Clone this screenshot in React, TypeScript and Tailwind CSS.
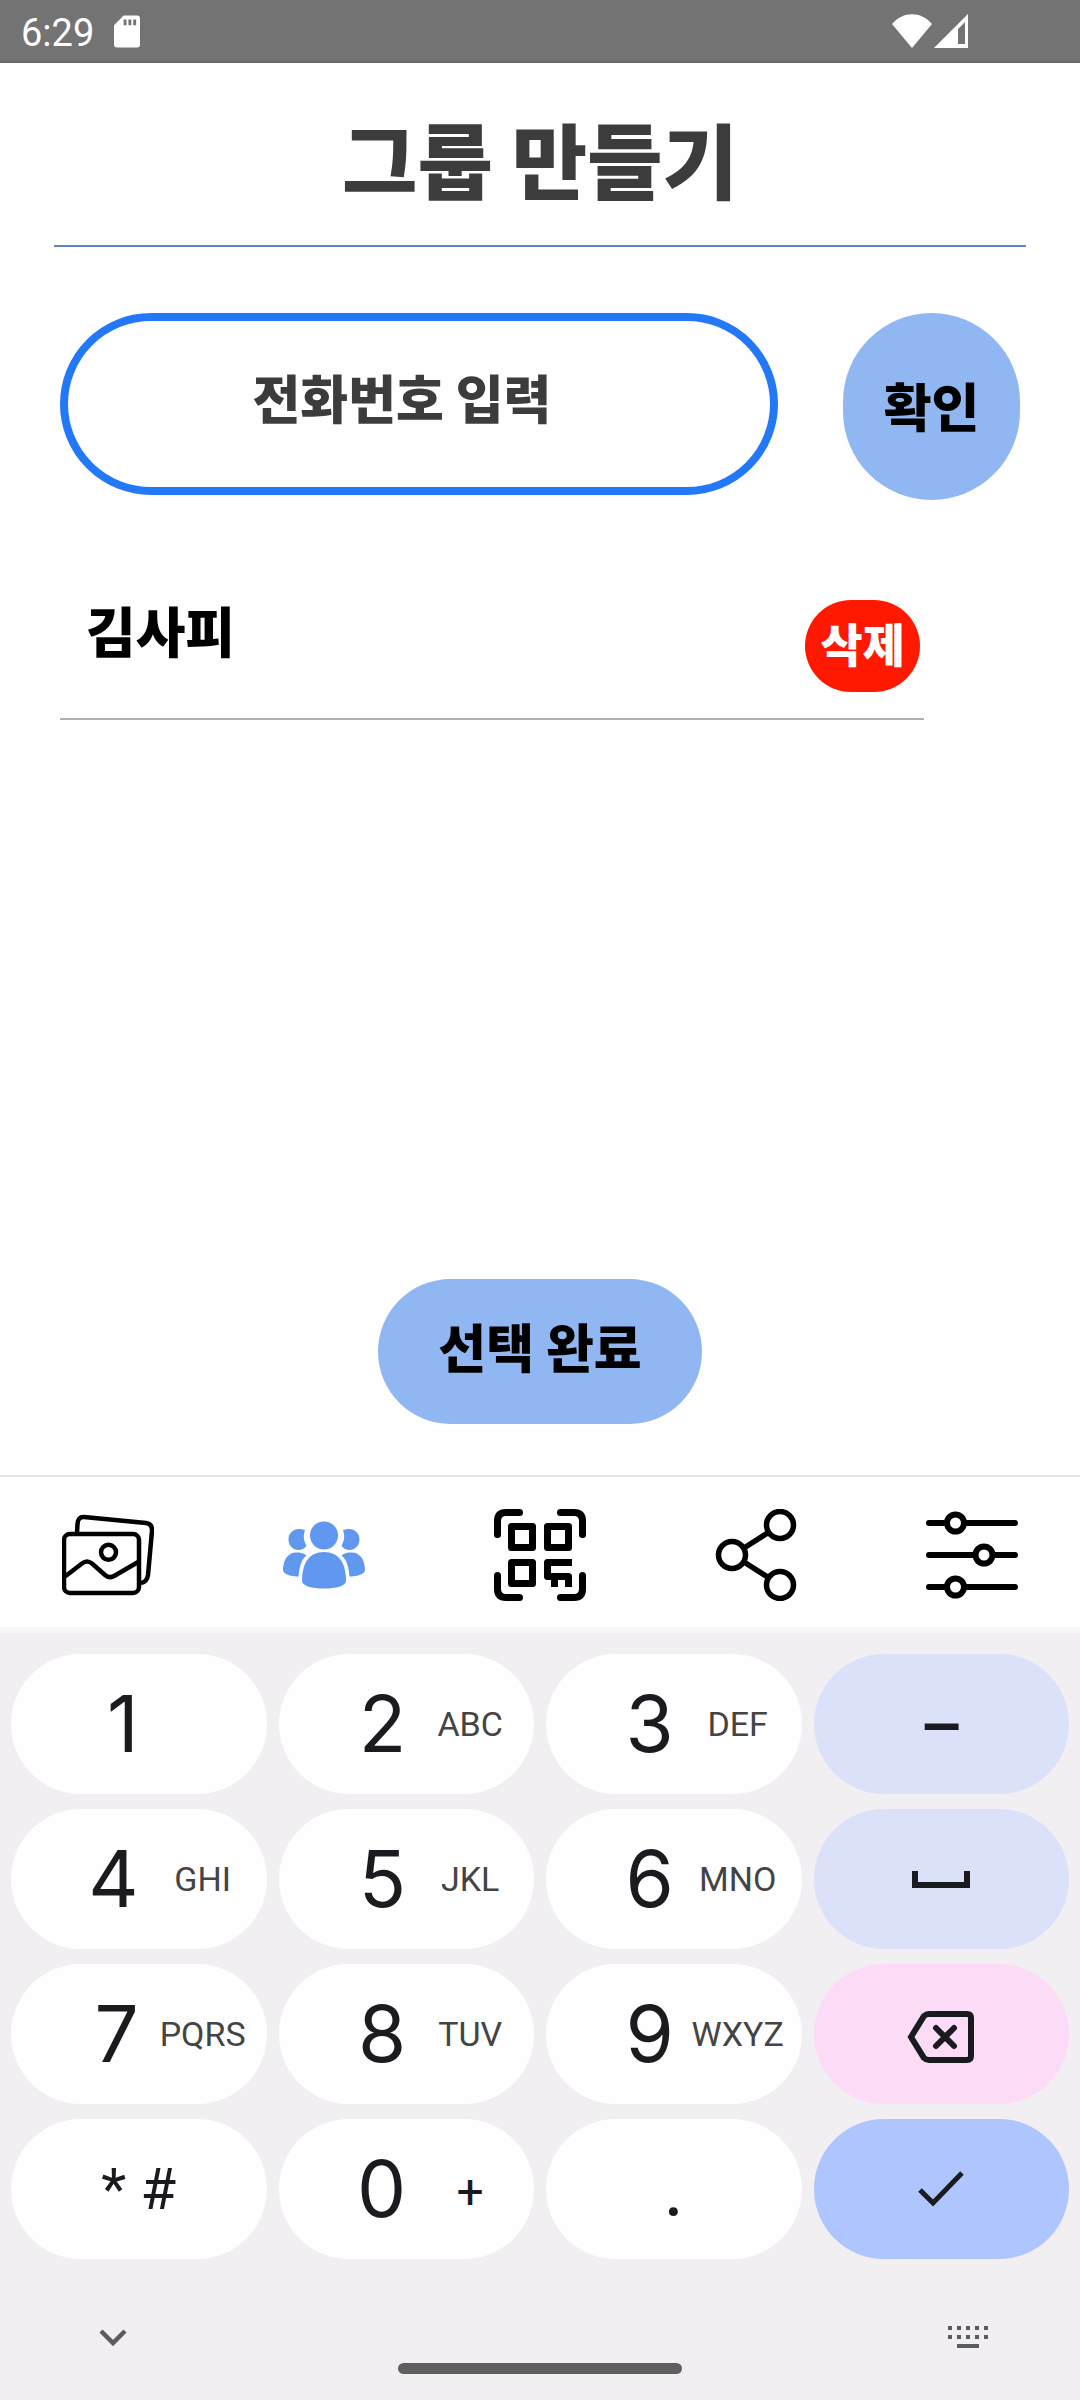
import type { ReactNode } from "react";

const korean = "font-['Noto_Sans_CJK_KR',sans-serif] font-black";

function StatusBar() {
  return (
    <div className="flex h-[63px] shrink-0 items-center border-b-2 border-[#686868] bg-[#737373] pl-[21px] pr-[112px] text-white">
      <span className="pt-1 text-[38px] leading-[40px]">6:29</span>
      <svg className="ml-[20px] mt-[2px] h-[33px] w-[26px]" viewBox="0 0 27 33" fill="currentColor" aria-hidden="true">
        <path d="M10 0H24Q27 0 27 3V30Q27 33 24 33H3Q0 33 0 30V10Z" />
        <path d="M10 4h3v6h-3zM15 4h3v6h-3zM20 4h3v6h-3z" fill="#737373" />
      </svg>
      <svg className="ml-auto h-[34px] w-[76px]" viewBox="0 0 76 34" fill="currentColor" aria-hidden="true">
        <path d="M0 10C11 -3 29 -3 40 10L20 34Z" />
        <path fillRule="evenodd" d="M76 0V34H42ZM73 8L66 15V30H73Z" />
      </svg>
    </div>
  );
}

function GalleryIcon() {
  return (
    <svg className="size-[92px]" viewBox="0 0 92 92" fill="none" stroke="currentColor" strokeWidth="4.5" aria-hidden="true">
      <path d="M15 24L15.500 15Q16 7.500 22 8L84 14Q90.500 15 90 22L86 66Q85 73 79 74" />
      <rect x="2" y="25" width="75" height="59" rx="6" />
      <circle cx="46.500" cy="43.300" r="7.500" />
      <path d="M3 67.500L20 54.500Q25 50.500 30 54.500L43 66Q47.500 70 53 66.500L77 52.500" />
    </svg>
  );
}

function PeopleIcon() {
  const side = (
    <>
      <path d="M27 21C25 27 25.500 31 28.500 37C26 40 23 41 20.500 41C15 41 10.500 36.500 10.500 30.500C10.500 24.500 15 20 21 20C23 20 25 20.300 27 21Z" />
      <path d="M5 61C5 51 10 43.500 18 43.500C22 43.500 26 44 28.500 46.500C23 51 21.500 58 20.500 67.500C14 67.500 5 65.500 5 61Z" />
    </>
  );
  return (
    <svg className="size-[92px] text-[#6198ef]" viewBox="0 0 92 92" fill="currentColor" aria-hidden="true">
      <circle cx="46" cy="26.500" r="14" />
      <path d="M24 72C24 54 31 43 46 43C61 43 68 54 68 72C68 77 58 79.500 46 79.500C34 79.500 24 77 24 72Z" />
      {side}
      <g transform="translate(92) scale(-1 1)">{side}</g>
    </svg>
  );
}

function QrIcon() {
  return (
    <svg className="size-[92px]" viewBox="0 0 92 92" fill="none" stroke="currentColor" strokeWidth="7" aria-hidden="true">
      <path
        strokeLinecap="round"
        d="M25.500 3.500H12Q3.500 3.500 3.500 12V25.500M66.500 3.500H80Q88.500 3.500 88.500 12V25.500M25.500 88.500H12Q3.500 88.500 3.500 80V66.500M66.500 88.500H80Q88.500 88.500 88.500 80V66.500"
      />
      <g strokeLinejoin="round">
        <rect x="17.500" y="17.500" width="21" height="21" />
        <rect x="53.500" y="17.500" width="21" height="21" />
        <rect x="17.500" y="53.500" width="21" height="21" />
        <path d="M78 53.500H53.500V67.500H74.500V78M60.500 67.500V78" />
      </g>
    </svg>
  );
}

function ShareIcon() {
  return (
    <svg className="size-[92px]" viewBox="0 0 92 92" fill="none" stroke="currentColor" strokeWidth="5.5" aria-hidden="true">
      <circle cx="70" cy="16" r="13.500" />
      <circle cx="22" cy="46" r="13.500" />
      <circle cx="70" cy="76" r="13.500" />
      <path d="M34 39L58.500 23.500M34 53L58.500 68.500" />
    </svg>
  );
}

function SlidersIcon() {
  return (
    <svg className="size-[92px]" viewBox="0 0 92 92" fill="none" stroke="currentColor" strokeWidth="6" strokeLinecap="round" aria-hidden="true">
      <path d="M3 14H20M40 14H89M3 46H48M68 46H89M3 78H20M40 78H89" />
      <circle cx="29.500" cy="14" r="8.500" />
      <circle cx="58" cy="46" r="8.500" />
      <circle cx="29.500" cy="78" r="8.500" />
    </svg>
  );
}

const tabs = [
  { label: "갤러리", icon: <GalleryIcon /> },
  { label: "그룹", icon: <PeopleIcon /> },
  { label: "QR 코드", icon: <QrIcon /> },
  { label: "공유", icon: <ShareIcon /> },
  { label: "설정", icon: <SlidersIcon /> },
];

const keyBase = "h-[140px] rounded-full text-[#1a1b1f]";

function DigitKey({ digit, letters }: { digit: string; letters?: string }) {
  return (
    <button className={`${keyBase} grid grid-cols-2 items-center bg-[#fefefe]`}>
      <span className="text-right font-[Inter,sans-serif] text-[78px] leading-[96px]">{digit}</span>
      {letters === "+" ? (
        <span className="pt-[6px] text-center text-[48px] leading-[48px]">+</span>
      ) : (
        <span className="text-center text-[34px] leading-[40px] text-[#444]">{letters}</span>
      )}
    </button>
  );
}

function ActionKey({ label, tone, children }: { label: string; tone: string; children: ReactNode }) {
  return (
    <button aria-label={label} className={`${keyBase} ${tone} flex items-center justify-center`}>
      {children}
    </button>
  );
}

function Keypad() {
  return (
    <div className="grid grid-cols-4 gap-x-3 gap-y-[15px] px-[11px] pt-[21px]">
      <DigitKey digit="1" />
      <DigitKey digit="2" letters="ABC" />
      <DigitKey digit="3" letters="DEF" />
      <ActionKey label="하이픈" tone="bg-[#dce1fa]">
        <span className="pt-2 text-[68px] font-medium leading-[72px]">–</span>
      </ActionKey>

      <DigitKey digit="4" letters="GHI" />
      <DigitKey digit="5" letters="JKL" />
      <DigitKey digit="6" letters="MNO" />
      <ActionKey label="스페이스" tone="bg-[#dce1fa]">
        <svg className="h-[18px] w-[60px]" viewBox="0 0 60 18" fill="none" stroke="currentColor" strokeWidth="6" aria-hidden="true">
          <path d="M4 1V15H56V1" />
        </svg>
      </ActionKey>

      <DigitKey digit="7" letters="PQRS" />
      <DigitKey digit="8" letters="TUV" />
      <DigitKey digit="9" letters="WXYZ" />
      <ActionKey label="지우기" tone="bg-[#fcdbf7]">
        <svg className="mt-[6px] h-[54px] w-[68px]" viewBox="0 0 68 54" fill="none" stroke="currentColor" strokeWidth="6" aria-hidden="true">
          <path d="M4 27L17 6Q19 4 22 4H60Q64 4 64 8V46Q64 50 60 50H22Q19 50 17 48Z" />
          <path strokeLinecap="round" d="M29 18L47 36M47 18L29 36" />
        </svg>
      </ActionKey>

      <button className={`${keyBase} bg-[#fefefe] text-center text-[58px] leading-[64px]`}>* #</button>
      <DigitKey digit="0" letters="+" />
      <button className={`${keyBase} bg-[#fefefe] text-center text-[80px] leading-[96px]`}>.</button>
      <ActionKey label="완료" tone="bg-[#afc5fe]">
        <svg className="h-[38px] w-[48px]" viewBox="0 0 48 38" fill="none" stroke="currentColor" strokeWidth="5" aria-hidden="true">
          <path d="M3 20L16 33L45 3" />
        </svg>
      </ActionKey>
    </div>
  );
}

export default function App() {
  return (
    <div className="flex min-h-screen flex-col bg-[#fefefe] font-[Roboto,sans-serif]">
      <StatusBar />

      <main className={`flex flex-1 flex-col ${korean} text-black`}>
        <header className="mx-[54px] flex h-[184px] items-center justify-center border-b-2 border-[#5b86c4] pt-2">
          <h1 className="text-[82px] leading-[96px] text-[#3c3c3c]">그룹 만들기</h1>
        </header>

        <form className="mt-[66px] flex items-start gap-[65px] px-[60px]">
          <input
            type="tel"
            aria-label="전화번호 입력"
            placeholder="전화번호 입력"
            className="h-[182px] min-w-0 flex-1 rounded-full border-8 border-[#2378f7] bg-transparent pb-4 pr-[34px] text-center text-[52px] leading-[64px] outline-none placeholder:text-[#3c3c3c] placeholder:opacity-100"
          />
          <button type="button" className="h-[187px] w-[177px] rounded-full bg-[#91b7f3] pb-1 text-[52px] leading-[64px]">
            확인
          </button>
        </form>

        <ul className="ml-[60px] mr-[156px] mt-[100px]">
          <li className="flex items-start justify-between border-b-2 border-[#afafaf] pb-[26px] pl-[26px] pr-1">
            <span className="text-[54px] leading-[60px]">김사피</span>
            <button className="h-[92px] w-[115px] rounded-full bg-[#ff1900] pb-2 text-[46px] leading-[56px] text-white">삭제</button>
          </li>
        </ul>

        <button className="mb-[51px] mt-auto h-[145px] w-[324px] self-center rounded-full bg-[#91b7f3] pb-3 text-[52px] leading-[64px]">
          선택 완료
        </button>
      </main>

      <nav className="grid h-[158px] shrink-0 grid-cols-5 border-b-[6px] border-t-2 border-b-[#f8f8f9] border-t-[#e4e5e5] text-black">
        {tabs.map((tab) => (
          <button key={tab.label} aria-label={tab.label} className="flex items-center justify-center pt-[6px]">
            {tab.icon}
          </button>
        ))}
      </nav>

      <section aria-label="키패드" className="flex h-[767px] shrink-0 flex-col bg-[#f1eff2]">
        <Keypad />
        <div className="mt-[59px] flex items-center justify-between px-[92px] text-[#5c5c5e]">
          <button aria-label="키보드 숨기기">
            <svg className="h-10 w-10" viewBox="0 0 40 40" fill="none" stroke="currentColor" strokeWidth="4.500" aria-hidden="true">
              <path d="M9 13L21 25L33 13" />
            </svg>
          </button>
          <button aria-label="키보드 전환">
            <svg className="h-10 w-10" viewBox="0 0 40 40" fill="currentColor" aria-hidden="true">
              <path d="M0 8h4v4h-4zM9 8h4v4h-4zM18 8h4v4h-4zM27 8h4v4h-4zM36 8h4v4h-4zM0 17h4v4h-4zM9 17h4v4h-4zM18 17h4v4h-4zM27 17h4v4h-4zM36 17h4v4h-4zM9 26h22v4h-22z" />
            </svg>
          </button>
        </div>
        <div className="mb-[26px] mt-auto h-[11px] w-[284px] self-center rounded-full bg-[#5f5f5f]" />
      </section>
    </div>
  );
}
